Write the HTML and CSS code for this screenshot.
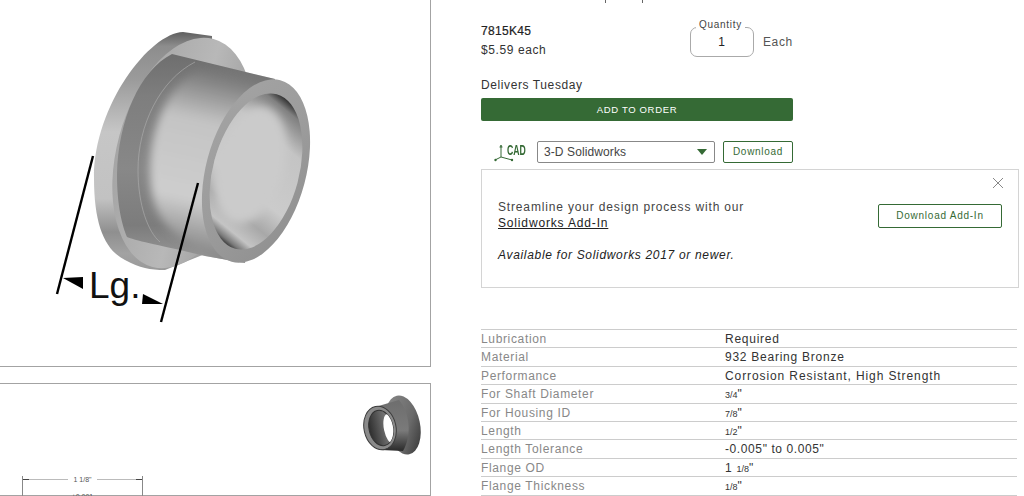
FILE: index.html
```html
<!DOCTYPE html>
<html lang="en">
<head>
<meta charset="utf-8">
<title>7815K45</title>
<link rel="stylesheet" href="styles.css">
</head>
<body>
<div class="page">
  <div class="media">
    <div class="panel panel-main">
      <svg class="bearing" viewBox="0 0 431 366" width="431" height="366">
        <defs>
          <linearGradient id="rim" x1="0" y1="0" x2="0" y2="1">
            <stop offset="0" stop-color="#5f5f5f"/><stop offset=".06" stop-color="#8d8d8d"/><stop offset=".2" stop-color="#9b9b9b"/><stop offset=".42" stop-color="#c6c6c6"/><stop offset=".7" stop-color="#c2c2c2"/><stop offset=".84" stop-color="#8f8f8f"/><stop offset=".93" stop-color="#a2a2a2"/><stop offset="1" stop-color="#9a9a9a"/>
          </linearGradient>
          <linearGradient id="face" x1="0" y1="0" x2="1" y2="0">
            <stop offset="0" stop-color="#a5a5a5"/><stop offset=".55" stop-color="#b8b8b8"/><stop offset=".8" stop-color="#a8a8a8"/><stop offset="1" stop-color="#b0b0b0"/>
          </linearGradient>
          <linearGradient id="fillet" x1="0" y1="0" x2="0" y2="1">
            <stop offset="0" stop-color="#6e6e6e"/><stop offset=".2" stop-color="#7e7e7e"/><stop offset=".55" stop-color="#888"/><stop offset=".82" stop-color="#7c7c7c"/><stop offset="1" stop-color="#9a9a9a"/>
          </linearGradient>
          <linearGradient id="tube" x1=".58" y1="0" x2=".42" y2="1">
            <stop offset="0" stop-color="#6c6c6c"/><stop offset=".1" stop-color="#8a8a8a"/><stop offset=".28" stop-color="#c4c4c4"/><stop offset=".66" stop-color="#cecece"/><stop offset=".82" stop-color="#a0a0a0"/><stop offset="1" stop-color="#707070"/>
          </linearGradient>
          <linearGradient id="ring" x1="0" y1="0" x2="1" y2="1">
            <stop offset="0" stop-color="#a4a4a4"/><stop offset=".5" stop-color="#9c9c9c"/><stop offset="1" stop-color="#8e8e8e"/>
          </linearGradient>
          <linearGradient id="bore" x1=".62" y1="0" x2=".38" y2="1">
            <stop offset="0" stop-color="#202020"/><stop offset=".07" stop-color="#808080"/><stop offset=".26" stop-color="#c4c4c4"/><stop offset=".62" stop-color="#cbcbcb"/><stop offset=".78" stop-color="#a8a8a8"/><stop offset=".9" stop-color="#c4c4c4"/><stop offset=".96" stop-color="#7a7a7a"/><stop offset="1" stop-color="#222"/>
          </linearGradient>
          <clipPath id="tube-clip"><path d="M172 54 C140 70 118 120 117 175 C117 205 122 225 127 237 C140 242 160 245 205 256 L245 263 L275 79 Z"/></clipPath>
          <clipPath id="bore-clip"><ellipse cx="256" cy="171.500" rx="43" ry="80" transform="rotate(15 256 171.500)"/></clipPath>
          <filter id="soft" x="-20%" y="-20%" width="140%" height="140%"><feGaussianBlur stdDeviation="4"/></filter>
        </defs>
        <path d="M183 32 C150 33 94 105 94 178 C94 225 105 250 125 260 C140 268 150 270 165 270 L215 250 L212 36 Z" fill="url(#rim)"/>
        <ellipse cx="183" cy="153" rx="66" ry="118" transform="rotate(15 183 153)" fill="url(#face)"/>
        <path d="M172 54 C140 70 118 120 117 175 C117 205 122 225 127 237 C140 242 160 245 205 256 L245 263 L275 79 Z" fill="url(#fillet)"/>
        <g clip-path="url(#tube-clip)">
          <path d="M200 70 C170 82 150 125 150 170 C150 205 160 225 185 240 L240 275 L300 85 Z" fill="url(#tube)" filter="url(#soft)"/>
        </g>
        <path d="M195 62 C160 80 138 125 138 170 C138 205 148 232 160 242" fill="none" stroke="#b0b0b0" stroke-width=".6"/>
        <ellipse cx="256" cy="171" rx="50" ry="94" transform="rotate(15 256 171)" fill="url(#ring)"/>
        <ellipse cx="256" cy="171.500" rx="43" ry="80" transform="rotate(15 256 171.500)" fill="url(#bore)"/>
        <g clip-path="url(#bore-clip)">
          <ellipse cx="250" cy="165" rx="34" ry="60" transform="rotate(15 250 165)" fill="#cbcbcb" filter="url(#soft)"/>
        </g>
        <line x1="93" y1="156" x2="57" y2="294" class="dim"/>
        <line x1="198" y1="183" x2="161" y2="322" class="dim"/>
        <polygon points="63,278 83,277 83,289" class="arrow"/>
        <polygon points="163,304 143,294 142,304" class="arrow"/>
        <text x="89" y="298" class="lg">Lg.</text>
      </svg>
    </div>
    <div class="panel panel-drawing">
      <svg class="thumb" viewBox="0 0 60 64" width="60" height="64">
        <defs>
          <linearGradient id="tf" x1="0" y1="0" x2="1" y2="1"><stop offset="0" stop-color="#8c8c8c"/><stop offset=".6" stop-color="#6a6a6a"/><stop offset="1" stop-color="#2c2c2c"/></linearGradient>
          <linearGradient id="tb" x1="0" y1="0" x2="0" y2="1"><stop offset="0" stop-color="#6e6e6e"/><stop offset=".6" stop-color="#7a7a7a"/><stop offset="1" stop-color="#2a2a2a"/></linearGradient>
          <linearGradient id="tbore" x1="0" y1="0" x2="1" y2="0"><stop offset="0" stop-color="#2e2e2e"/><stop offset="1" stop-color="#8a8a8a"/></linearGradient>
          <clipPath id="tbore-clip"><ellipse cx="18" cy="33" rx="12" ry="18" transform="rotate(-12 18 33)"/></clipPath>
        </defs>
        <ellipse cx="40" cy="30" rx="17" ry="30" transform="rotate(-12 40 30)" fill="url(#tf)"/>
        <path d="M12 12 L36 5 C47 18 49 40 40 56 L18 55 Z" fill="url(#tb)"/>
        <ellipse cx="17" cy="33" rx="16" ry="22" transform="rotate(-12 17 33)" fill="#8a8a8a" stroke="#3c3c3c"/>
        <ellipse cx="18" cy="33" rx="12" ry="18" transform="rotate(-12 18 33)" fill="url(#tbore)" stroke="#333"/>
        <g clip-path="url(#tbore-clip)"><ellipse cx="27" cy="34" rx="6" ry="15" transform="rotate(-12 27 34)" fill="#fff"/></g>
      </svg>
      <div class="drawing">
        <div class="dim-row"><span class="dim-line"></span><span class="dim-text">1 1/8"</span><span class="dim-line dim-line-end"></span></div>
        <div class="dim-sub">±0.001</div>
      </div>
    </div>
  </div>
  <div class="details">
    <div class="frag"><span class="frag-mark"></span><span class="frag-mark"></span></div>
    <div class="buy">
      <div class="buy-row">
        <div class="price">
          <div class="part">7815K45</div>
          <div class="each">$5.59 each</div>
        </div>
        <div class="qty-wrap">
          <div class="qty"><span class="qty-label">Quantity</span><span class="qty-value">1</span></div>
          <span class="unit">Each</span>
        </div>
      </div>
      <div class="delivery">Delivers Tuesday</div>
      <div class="add">ADD TO ORDER</div>
      <div class="cad-row">
        <div class="cad-logo">
          <svg viewBox="0 0 20 20" width="20" height="20" class="cad-icon"><path d="M7 5 V15 L1 18 M7 15 L18 18 M5.500 5 H8.500" fill="none" stroke="#356a35" stroke-width="1"/><circle cx="7" cy="4" r="1" fill="#356a35"/><circle cx="1.500" cy="18" r="1.200" fill="#356a35"/><circle cx="18" cy="18" r="1.200" fill="#356a35"/></svg>
          <span class="cad-text">CAD</span>
        </div>
        <div class="select"><span>3-D Solidworks</span><span class="caret"></span></div>
        <div class="btn">Download</div>
      </div>
    </div>
    <div class="notice">
      <div class="close">
        <svg viewBox="0 0 10 10" width="10" height="10"><path d="M0 0 L10 10 M10 0 L0 10" stroke="#888" stroke-width="1" fill="none"/></svg>
      </div>
      <div class="notice-body">
        <div class="notice-text">
          <p>Streamline your design process with our<br><a class="link">Solidworks Add-In</a></p>
          <p class="avail">Available for Solidworks 2017 or newer.</p>
        </div>
        <div class="btn btn-wide">Download Add-In</div>
      </div>
    </div>
    <div class="specs">
      <div class="spec"><span class="key">Lubrication</span><span class="val">Required</span></div>
      <div class="spec"><span class="key">Material</span><span class="val">932 Bearing Bronze</span></div>
      <div class="spec"><span class="key">Performance</span><span class="val val-wide">Corrosion Resistant, High Strength</span></div>
      <div class="spec"><span class="key">For Shaft Diameter</span><span class="val"><small>3/4</small>"</span></div>
      <div class="spec"><span class="key">For Housing ID</span><span class="val"><small>7/8</small>"</span></div>
      <div class="spec"><span class="key">Length</span><span class="val"><small>1/2</small>"</span></div>
      <div class="spec"><span class="key">Length Tolerance</span><span class="val val-num">-0.005" to 0.005"</span></div>
      <div class="spec"><span class="key">Flange OD</span><span class="val">1 <small>1/8</small>"</span></div>
      <div class="spec"><span class="key">Flange Thickness</span><span class="val"><small>1/8</small>"</span></div>
    </div>
  </div>
</div>
</body>
</html>
```

FILE: styles.css
```css
* { box-sizing: border-box; }
html, body { margin: 0; height: 496px; overflow: hidden; background: #fff; }
body { font-family: "Liberation Sans", Arial, sans-serif; font-size: 12px; letter-spacing: .6px; color: #333; }
.page { display: flex; height: 496px; overflow: hidden; }
.media { width: 431px; flex: none; display: flex; flex-direction: column; gap: 16px; }
.panel { border: 1px solid #a3a3a3; border-left: 0; background: #fff; }
.panel-main { height: 367px; border-top: 0; }
.bearing { display: block; }
.lg { font-size: 37px; letter-spacing: 0; fill: #111; font-family: "Liberation Sans", Arial, sans-serif; }
.dim { stroke: #000; stroke-width: 2.400; }
.arrow { fill: #000; }
.panel-drawing { position: relative; height: 130px; }
.thumb { position: absolute; left: 363px; top: 11px; }
.drawing { position: absolute; left: 22px; top: 92px; width: 121px; height: 30px; border-left: 1px solid #888; border-right: 1px solid #888; font-size: 7px; letter-spacing: 0; text-align: center; color: #555; }
.dim-row { display: flex; align-items: center; gap: 5px; height: 7px; }
.dim-line { flex: 1; height: 1px; background: linear-gradient(90deg, #444 0 6px, #bbb 6px); }
.dim-line-end { background: linear-gradient(270deg, #444 0 6px, #bbb 6px); }
.dim-sub { margin-top: 10px; }
.details { margin-left: 50px; width: 538px; flex: none; }
.frag { display: flex; gap: 36px; height: 3px; padding-left: 124px; }
.frag-mark { width: 1px; height: 3px; background: #666; }
.buy { width: 312px; }
.buy-row { display: flex; justify-content: space-between; padding-top: 17px; }
.price { line-height: 19px; padding-top: 2px; }
.part { color: #222; -webkit-text-stroke: .2px #222; letter-spacing: .3px; }
.qty-wrap { display: flex; align-items: center; gap: 9px; width: 103px; padding-top: 4px; }
.qty { position: relative; width: 64px; height: 30px; border: 1px solid #aaa; border-radius: 7px; text-align: center; line-height: 28px; color: #222; }
.qty-label { position: absolute; left: 5px; top: -10px; padding: 0 3px; background: #fff; line-height: 13px; font-size: 10px; letter-spacing: .7px; color: #444; }
.unit { color: #555; }
.delivery { margin-top: 17px; line-height: 16px; }
.add { margin-top: 5px; height: 23px; background: #356a35; border-radius: 2px; color: #fff; font-size: 9.500px; letter-spacing: .65px; line-height: 23px; text-align: center; }
.cad-row { display: flex; align-items: center; margin-top: 20px; height: 22px; }
.cad-logo { width: 56px; display: flex; align-items: center; justify-content: flex-end; padding-right: 11px; }
.cad-icon { flex: none; }
.cad-text { font-weight: 700; font-size: 14px; letter-spacing: 0; color: #356a35; transform: scaleX(.62); transform-origin: left center; margin: 0 -11px 4px -7px; line-height: 14px; }
.select { width: 178px; height: 22px; border: 1px solid #888; border-radius: 2px; padding: 0 7px 0 6px; display: flex; align-items: center; justify-content: space-between; color: #444; letter-spacing: .1px; }
.caret { width: 0; height: 0; border-left: 5.500px solid transparent; border-right: 5.500px solid transparent; border-top: 6px solid #356a35; }
.btn { border: 1px solid #356a35; border-radius: 2px; color: #356a35; font-size: 10px; letter-spacing: .7px; text-align: center; }
.cad-row .btn { width: 70px; height: 22px; line-height: 20px; margin-left: 8px; }
.notice { position: relative; margin-top: 6px; width: 538px; height: 119px; border: 1px solid #d4d4d4; padding: 0 16px; }
.close { position: absolute; right: 15px; top: 8px; height: 10px; line-height: 0; }
.notice-body { display: flex; justify-content: space-between; padding-top: 29px; }
.notice-text p { margin: 0; line-height: 16px; color: #444; letter-spacing: .84px; }
.notice-text .avail { margin-top: 16px; font-style: italic; color: #222; letter-spacing: .68px; }
.link { color: #222; text-decoration: underline; }
.btn-wide { width: 124px; height: 24px; line-height: 22px; margin-top: 5px; letter-spacing: .75px; }
.specs { width: 536px; margin-top: 41px; border-top: 1px solid #ccc; }
.spec { display: flex; height: 18.400px; line-height: 18px; border-bottom: 1px solid #ccc; }
.key { width: 244px; color: #888; letter-spacing: .65px; }
.val { color: #333; letter-spacing: .75px; }
.val-wide { letter-spacing: .9px; }
.val-num { letter-spacing: .6px; }
small { font-size: 9px; letter-spacing: 0; }
```
